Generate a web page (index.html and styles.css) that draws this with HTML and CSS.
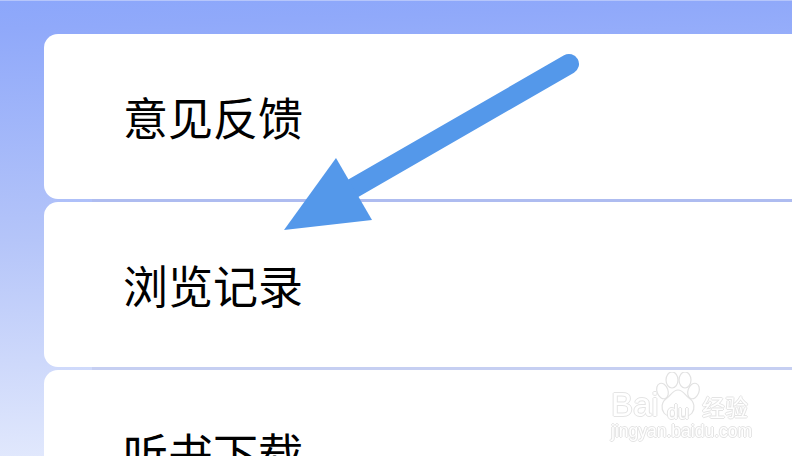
FILE: index.html
```html
<!DOCTYPE html>
<html lang="zh-CN">
<head>
<meta charset="utf-8">
<title>设置</title>
<link rel="stylesheet" href="styles.css">
</head>
<body>
<main class="list">
  <div class="card"><span class="label">意见反馈</span></div>
  <div class="sep sep-one"></div>
  <div class="card"><span class="label">浏览记录</span></div>
  <div class="sep sep-two"></div>
  <div class="card"><span class="label">听书下载</span></div>
</main>
<svg class="arrow" viewBox="0 0 792 456" width="792" height="456" aria-hidden="true">
  <line x1="569" y1="64" x2="352" y2="189" stroke="#5498ea" stroke-width="20" stroke-linecap="round"/>
  <polygon points="336,158 284,230 372,220" fill="#5498ea"/>
</svg>
<div class="mark">
  <svg class="paw" viewBox="0 0 46 52" width="46" height="52" aria-hidden="true">
    <ellipse cx="7.5" cy="19" rx="5.5" ry="8" transform="rotate(-20 7.5 19)"/>
    <ellipse cx="17" cy="8" rx="6" ry="8"/>
    <ellipse cx="30" cy="8" rx="6" ry="8"/>
    <ellipse cx="38.5" cy="19" rx="5.5" ry="8" transform="rotate(20 38.5 19)"/>
    <path d="M23 18c-5 0-7 5-11 8-6 4-6 11-3 15 3 4 8 4 14 3 6 1 11 1 14-3 3-4 3-11-3-15-4-3-6-8-11-8z"/>
  </svg>
  <span class="bai">Bai</span>
  <span class="du">du</span>
  <span class="jy">经验</span>
  <span class="url">jingyan.baidu.com</span>
</div>
</body>
</html>
```
FILE: styles.css
```css
html, body {
  margin: 0;
  height: 100%;
}
body {
  width: 792px;
  height: 456px;
  overflow: hidden;
  position: relative;
  background: linear-gradient(178deg, #8ca7fb 0%, #90a9fa 6%, #b5c5f9 50%, #e6ecfd 100%);
  border-top: 1px solid #b6c6fb;
  box-sizing: border-box;
}
.list {
  display: flex;
  flex-direction: column;
  padding: 33px 0 0 44px;
}
.card {
  flex: none;
  height: 165px;
  background: #fff;
  border-radius: 14px 0 0 14px;
  display: flex;
  align-items: center;
  padding-left: 79px;
}
.label {
  font-family: "Noto Sans CJK SC", sans-serif;
  font-size: 45px;
  font-weight: 400;
  line-height: 1;
  color: #000;
}
.sep {
  height: 3px;
  margin-left: 48px;
}
.sep-one { background: #aebcf0; }
.sep-two { background: #c6cff2; }
.arrow {
  position: absolute;
  left: 0;
  top: -1px;
}
.mark {
  position: absolute;
  left: 606px;
  top: 365px;
  width: 150px;
  height: 80px;
  font-family: "Liberation Sans", sans-serif;
  color: #fff;
  text-shadow: 1px 0 #e4e4e4, -1px 0 #e4e4e4, 0 1px #e4e4e4, 0 -1px #e4e4e4;
  filter: blur(0.4px);
}
.mark span {
  position: absolute;
  white-space: nowrap;
}
.paw {
  position: absolute;
  left: 49px;
  top: 6px;
  fill: #fff;
  stroke: #e2e2e2;
  stroke-width: 1.2;
}
.bai {
  left: 5px;
  top: 22px;
  font-size: 33px;
  line-height: 34px;
}
.du {
  left: 61px;
  top: 36px;
  font-size: 20px;
  line-height: 20px;
}
.jy {
  left: 96px;
  top: 25px;
  font-family: "Noto Sans CJK SC", sans-serif;
  font-size: 23px;
  line-height: 30px;
}
.url {
  left: 5px;
  top: 56px;
  font-size: 17.5px;
  line-height: 18px;
}
```
